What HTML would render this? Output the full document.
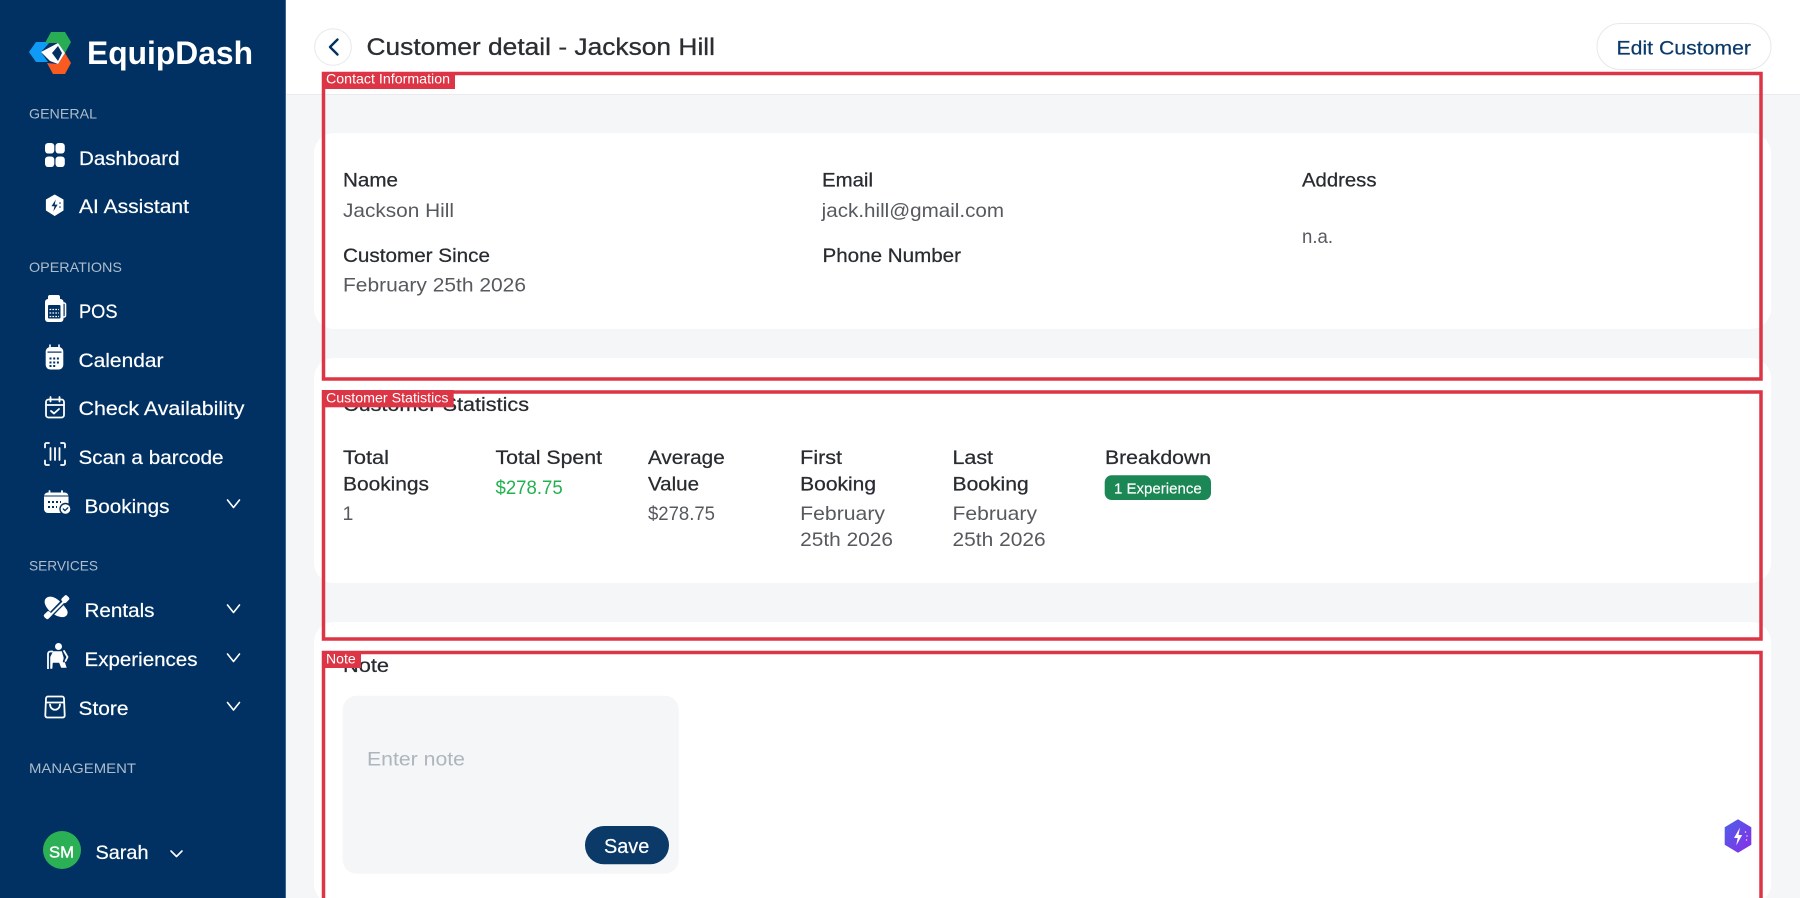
<!DOCTYPE html>
<html lang="en">
<head>
<meta charset="utf-8">
<title>Customer detail - Jackson Hill</title>
<style>
html,body{margin:0;padding:0;width:1800px;height:898px;overflow:hidden;background:#f5f6f8}
svg{display:block;position:absolute;left:0;top:0}
text{font-family:"Liberation Sans",sans-serif}
.nav{fill:#fff;font-size:19.5px;stroke:#fff;stroke-width:.2}
.sec{fill:#aebccb;font-size:14px}
.h{fill:#282b2f;font-size:19.5px;stroke:#282b2f;stroke-width:.25}
.v{fill:#56595e;font-size:19.5px}
.lab{fill:#fff;font-size:14px}
.ch{fill:none;stroke:#fff;stroke-width:1.6;stroke-linecap:round;stroke-linejoin:round}
.ol{fill:none;stroke:#fff;stroke-width:1.8;stroke-linecap:round;stroke-linejoin:round}
</style>
</head>
<body>
<svg width="1800" height="898" viewBox="0 0 1800 898" xmlns="http://www.w3.org/2000/svg">
<defs>
<linearGradient id="fab" x1="0" y1="0" x2="1" y2="1"><stop offset="0" stop-color="#4a62e8"/><stop offset="1" stop-color="#8a2be8"/></linearGradient>
</defs>

<!-- main background -->
<rect x="0" y="0" width="1800" height="898" fill="#f5f6f8"/>
<rect x="286" y="0" width="1514" height="94" fill="#fff"/>
<rect x="286" y="94" width="1514" height="1" fill="#e9ebee"/>

<!-- cards -->
<rect x="314" y="133" width="1457" height="196" rx="20" fill="#fff"/>
<rect x="314" y="358" width="1457" height="225" rx="20" fill="#fff"/>
<rect x="314" y="622" width="1457" height="282" rx="20" fill="#fff"/>

<!-- sidebar -->
<rect x="0" y="0" width="285" height="898" fill="#013162"/>
<rect x="285" y="0" width="1" height="898" fill="#3f628c"/>

<!-- logo -->
<polygon points="29,52 36,42 50,42 41,52 48,62 36,62" fill="#0f9bf5"/>
<polygon points="51,32 65,32 71,42 65,53 58,43 45,43" fill="#28ad55"/>
<polygon points="47,63 58,64 65,53 71,63 65,74 53,74" fill="#f85a20"/>
<polygon points="41,52 58,43 65,53 58,64 50,61 46,57" fill="#fff"/>
<polygon points="52,53 58,46 62,53 58,61" fill="#013162"/>
<text x="87" y="64" font-size="32" font-weight="700" fill="#fff" textLength="166" lengthAdjust="spacingAndGlyphs">EquipDash</text>

<!-- section labels -->
<text class="sec" x="29" y="118.500" textLength="68" lengthAdjust="spacingAndGlyphs">GENERAL</text>
<text class="sec" x="29" y="272" textLength="93" lengthAdjust="spacingAndGlyphs">OPERATIONS</text>
<text class="sec" x="29" y="570.500" textLength="69" lengthAdjust="spacingAndGlyphs">SERVICES</text>
<text class="sec" x="29" y="773" textLength="107" lengthAdjust="spacingAndGlyphs">MANAGEMENT</text>

<!-- nav items -->
<text class="nav" x="79" y="165" textLength="100.500" lengthAdjust="spacingAndGlyphs">Dashboard</text>
<text class="nav" x="79" y="213" textLength="110" lengthAdjust="spacingAndGlyphs">AI Assistant</text>
<text class="nav" x="79" y="318" textLength="38.500" lengthAdjust="spacingAndGlyphs">POS</text>
<text class="nav" x="78.500" y="367" textLength="85" lengthAdjust="spacingAndGlyphs">Calendar</text>
<text class="nav" x="78.500" y="415" textLength="166" lengthAdjust="spacingAndGlyphs">Check Availability</text>
<text class="nav" x="78.500" y="464" textLength="145" lengthAdjust="spacingAndGlyphs">Scan a barcode</text>
<text class="nav" x="84.500" y="513" textLength="85" lengthAdjust="spacingAndGlyphs">Bookings</text>
<text class="nav" x="84.500" y="617" textLength="70" lengthAdjust="spacingAndGlyphs">Rentals</text>
<text class="nav" x="84.500" y="666" textLength="113" lengthAdjust="spacingAndGlyphs">Experiences</text>
<text class="nav" x="78.500" y="715" textLength="50" lengthAdjust="spacingAndGlyphs">Store</text>

<!-- chevrons -->
<path class="ch" d="M227.500 500l6 7.500 6-7.500"/>
<path class="ch" d="M227.500 605l6 7.500 6-7.500"/>
<path class="ch" d="M227.500 654l6 7.500 6-7.500"/>
<path class="ch" d="M227.500 702.500l6 7.500 6-7.500"/>
<path class="ch" d="M171 851l5.500 5.500 5.500-5.500"/>

<!-- dashboard icon -->
<rect x="45" y="143" width="9.300" height="10.500" rx="3.200" fill="#fff"/>
<rect x="55.500" y="143" width="9.300" height="10.500" rx="3.200" fill="#fff"/>
<rect x="45" y="156.500" width="9.300" height="10.500" rx="3.200" fill="#fff"/>
<rect x="55.500" y="156.500" width="9.300" height="10.500" rx="3.200" fill="#fff"/>

<!-- AI icon -->
<path d="M54.700 195l8.300 4.800v10.400l-8.300 5.300-8.300-5.300v-10.400z" fill="#fff" stroke="#fff" stroke-width="1" stroke-linejoin="round"/>
<path d="M55.800 199.500l-4.300 6.700h3l-1.200 5.300 4.400-6.900h-3z" fill="#013162"/>
<circle cx="60" cy="203" r=".8" fill="#013162"/><circle cx="60" cy="207" r=".8" fill="#013162"/>

<!-- POS icon -->
<path d="M50 295h8a2 2 0 0 1 2 2v3H48v-3a2 2 0 0 1 2-2z" fill="#fff"/>
<rect x="45" y="299" width="18.500" height="23" rx="3" fill="#fff"/>
<path d="M63.500 303h.500a1.500 1.500 0 0 1 1.500 1.500v11a1.500 1.500 0 0 1-1.500 1.500h-.5" fill="none" stroke="#fff" stroke-width="1.600"/>
<rect x="48" y="305" width="12.500" height="13.500" rx="1" fill="#013162"/>
<path d="M49.500 309.500h9.500M49.500 313h9.500M49.500 316.500h9.500" stroke="#fff" stroke-width="1.300" stroke-dasharray="1.700 1.200"/>

<!-- Calendar icon -->
<rect x="45.700" y="347" width="17.600" height="22.500" rx="4.500" fill="#fff"/>
<rect x="47.500" y="351.500" width="14" height="1.200" fill="#013162"/>
<path d="M50 345v4M59 345v4" stroke="#fff" stroke-width="1.600" stroke-linecap="round"/>
<path d="M49.500 358.500h10.500M49.500 362.500h10.500M49.500 366h7" stroke="#013162" stroke-width="2" stroke-dasharray="2 1.700"/>

<!-- Check availability icon -->
<rect x="46" y="399.500" width="18" height="18" rx="2.500" class="ol"/>
<path class="ol" d="M46 405h18M50.500 397v4.500M59.500 397v4.500"/>
<path class="ol" d="M51 411l3 2.500 5-4.500"/>

<!-- Scan icon -->
<path class="ol" d="M49 443h-2.500a1.500 1.500 0 0 0-1.500 1.500v3M61 443h2.500a1.500 1.500 0 0 1 1.500 1.500v3M49 465h-2.500a1.500 1.500 0 0 1-1.500-1.500v-3M61 465h2.500a1.500 1.500 0 0 0 1.500-1.500v-3"/>
<path class="ol" d="M50.500 448v12M55 448v12M59.500 448v12"/>

<!-- Bookings icon -->
<rect x="44" y="492.500" width="24.500" height="20.500" rx="4" fill="#fff"/>
<path d="M49.500 491v3M62 491v3" stroke="#fff" stroke-width="1.800" stroke-linecap="round"/>
<rect x="44" y="495.500" width="24.500" height="1" fill="#013162"/>
<path d="M48 502h13M48 507h9" stroke="#013162" stroke-width="2" stroke-dasharray="2 2"/>
<circle cx="65.500" cy="509" r="6.200" fill="#013162"/>
<circle cx="65.500" cy="509" r="4.800" fill="#fff"/>
<path d="M63.300 509l1.700 1.600 2.800-2.800" fill="none" stroke="#013162" stroke-width="1.300" stroke-linecap="round"/>

<!-- Rentals icon -->
<path d="M48 597c6-2 14 5 19 13 2 4-1 8-6 7-7-1-14-7-16-13-1-3 0-6 3-7z" fill="#fff"/>
<path d="M47 618.500L67 598" stroke="#013162" stroke-width="5"/>
<path d="M48 617.500L67 598.500" stroke="#fff" stroke-width="2"/>
<rect x="62.500" y="595.500" width="6" height="7.500" rx="2" transform="rotate(45 65.500 599)" fill="#fff"/>
<rect x="45" y="611.500" width="6" height="7.500" rx="2" transform="rotate(45 48 615)" fill="#fff"/>

<!-- Experiences icon -->
<circle cx="58.500" cy="646.500" r="3.500" fill="#fff"/>
<path d="M53 651h9l2 7-1 4h2l2 6h-6l-2-5h-6l-.500 6H50v-12z" fill="#fff" stroke="#013162" stroke-width=".5"/>
<path d="M48 669v-15c0-1.500 1-2.500 2.500-2.500H53" fill="none" stroke="#fff" stroke-width="1.800"/>
<path d="M64 651l3.500 6-2 4" fill="none" stroke="#fff" stroke-width="1.800" stroke-linecap="round"/>

<!-- Store icon -->
<path class="ol" d="M48 696.500h14a2 2 0 0 1 2 1.800l.700 17a2 2 0 0 1-2 2.200H47.300a2 2 0 0 1-2-2.200l.700-17a2 2 0 0 1 2-1.800z"/>
<path class="ol" d="M46 702.500h18M50 704.500c.500 7 9.500 7 10 0"/>

<!-- user -->
<circle cx="62" cy="850" r="19" fill="#2bb055"/>
<text x="49" y="857.500" font-size="16" fill="#fff" stroke="#fff" stroke-width=".4" textLength="25" lengthAdjust="spacingAndGlyphs">SM</text>
<text class="nav" x="95.500" y="859" textLength="53" lengthAdjust="spacingAndGlyphs">Sarah</text>

<!-- header -->
<circle cx="333" cy="47" r="18.300" fill="#fff" stroke="#e6e8eb" stroke-width="1"/>
<path d="M337.500 39.500L330 47l7.500 7.500" fill="none" stroke="#013162" stroke-width="2.400" stroke-linecap="round" stroke-linejoin="round"/>
<text x="366.500" y="55" font-size="24" fill="#2b2e32" stroke="#2b2e32" stroke-width=".3" textLength="348.500" lengthAdjust="spacingAndGlyphs">Customer detail - Jackson Hill</text>
<rect x="1597" y="23.500" width="174" height="46" rx="23" fill="#fff" stroke="#e6e8eb" stroke-width="1"/>
<text x="1616.500" y="54.500" font-size="19.500" fill="#0b3a6a" stroke="#0b3a6a" stroke-width=".2" textLength="134.500" lengthAdjust="spacingAndGlyphs">Edit Customer</text>

<!-- contact information -->
<text class="h" x="343" y="186.500" textLength="55" lengthAdjust="spacingAndGlyphs">Name</text>
<text class="v" x="343" y="217" textLength="111" lengthAdjust="spacingAndGlyphs">Jackson Hill</text>
<text class="h" x="343" y="262" textLength="147" lengthAdjust="spacingAndGlyphs">Customer Since</text>
<text class="v" x="343" y="291.500" textLength="183" lengthAdjust="spacingAndGlyphs">February 25th 2026</text>
<text class="h" x="822" y="186.500" textLength="51" lengthAdjust="spacingAndGlyphs">Email</text>
<text class="v" x="821.700" y="217" textLength="182.300" lengthAdjust="spacingAndGlyphs">jack.hill@gmail.com</text>
<text class="h" x="822.500" y="262" textLength="138.500" lengthAdjust="spacingAndGlyphs">Phone Number</text>
<text class="h" x="1302" y="186.500" textLength="74.500" lengthAdjust="spacingAndGlyphs">Address</text>
<text class="v" x="1302" y="243" textLength="31" lengthAdjust="spacingAndGlyphs">n.a.</text>

<!-- customer statistics -->
<text class="h" x="343" y="411" textLength="186" lengthAdjust="spacingAndGlyphs">Customer Statistics</text>
<text class="h" x="343" y="464" textLength="46" lengthAdjust="spacingAndGlyphs">Total</text>
<text class="h" x="343" y="490.700" textLength="86" lengthAdjust="spacingAndGlyphs">Bookings</text>
<text class="v" x="342.500" y="520">1</text>
<text class="h" x="495.500" y="464" textLength="106.500" lengthAdjust="spacingAndGlyphs">Total Spent</text>
<text x="495.500" y="494" font-size="19.500" fill="#22b14f" textLength="67.200" lengthAdjust="spacingAndGlyphs">$278.75</text>
<text class="h" x="648" y="464" textLength="76.700" lengthAdjust="spacingAndGlyphs">Average</text>
<text class="h" x="648" y="490.700" textLength="51" lengthAdjust="spacingAndGlyphs">Value</text>
<text class="v" x="648" y="520" textLength="67" lengthAdjust="spacingAndGlyphs">$278.75</text>
<text class="h" x="800.200" y="464" textLength="41.800" lengthAdjust="spacingAndGlyphs">First</text>
<text class="h" x="800.200" y="490.700" textLength="75.800" lengthAdjust="spacingAndGlyphs">Booking</text>
<text class="v" x="800.200" y="520" textLength="84.800" lengthAdjust="spacingAndGlyphs">February</text>
<text class="v" x="800.200" y="546" textLength="92.800" lengthAdjust="spacingAndGlyphs">25th 2026</text>
<text class="h" x="952.500" y="464" textLength="40.500" lengthAdjust="spacingAndGlyphs">Last</text>
<text class="h" x="952.500" y="490.700" textLength="76.200" lengthAdjust="spacingAndGlyphs">Booking</text>
<text class="v" x="952.500" y="520" textLength="84.500" lengthAdjust="spacingAndGlyphs">February</text>
<text class="v" x="952.500" y="546" textLength="93.200" lengthAdjust="spacingAndGlyphs">25th 2026</text>
<text class="h" x="1105" y="464" textLength="106" lengthAdjust="spacingAndGlyphs">Breakdown</text>
<rect x="1104.700" y="475.300" width="106.300" height="24.700" rx="7" fill="#1b8755"/>
<text x="1114" y="493.500" font-size="15" fill="#fff" stroke="#fff" stroke-width=".15" textLength="87.700" lengthAdjust="spacingAndGlyphs">1 Experience</text>

<!-- note -->
<text class="h" x="343" y="672" textLength="46" lengthAdjust="spacingAndGlyphs">Note</text>
<rect x="342.700" y="695.700" width="336" height="178" rx="14" fill="#f5f6f8"/>
<text x="367" y="765.700" font-size="19.500" fill="#adb5bd" textLength="98" lengthAdjust="spacingAndGlyphs">Enter note</text>
<rect x="585" y="826" width="84" height="38.300" rx="19" fill="#0b3a68"/>
<text x="604" y="853" font-size="20" fill="#fff" stroke="#fff" stroke-width=".2" textLength="45.300" lengthAdjust="spacingAndGlyphs">Save</text>

<!-- floating button -->
<path d="M1738 819.300l13.300 8v17.400l-13.300 8-13.300-8v-17.400z" fill="url(#fab)"/>
<path d="M1740 827.500l-6 10.500h3.700l-1.500 7.500 6-10.500h-3.700z" fill="#fff"/>
<circle cx="1745.500" cy="832" r=".8" fill="#e8dcff"/><circle cx="1747" cy="836" r=".7" fill="#e8dcff"/><circle cx="1746.500" cy="840" r=".7" fill="#e8dcff"/>

<!-- annotation overlays -->
<rect x="323.500" y="73.500" width="1437.500" height="305.500" fill="none" stroke="#dc3545" stroke-width="3.500"/>
<rect x="322" y="72" width="133" height="17" fill="#dc3545"/>
<text class="lab" x="326" y="83.700" textLength="124" lengthAdjust="spacingAndGlyphs">Contact Information</text>

<rect x="323.500" y="392" width="1437.500" height="247" fill="none" stroke="#dc3545" stroke-width="3.500"/>
<rect x="322" y="390" width="131.700" height="17.300" fill="#dc3545"/>
<text class="lab" x="326" y="402.500" textLength="122.500" lengthAdjust="spacingAndGlyphs">Customer Statistics</text>

<rect x="323.500" y="652.500" width="1437.500" height="260" fill="none" stroke="#dc3545" stroke-width="3.500"/>
<rect x="322" y="651" width="39" height="17" fill="#dc3545"/>
<text class="lab" x="326" y="663.500" textLength="29.700" lengthAdjust="spacingAndGlyphs">Note</text>
</svg>
</body>
</html>
